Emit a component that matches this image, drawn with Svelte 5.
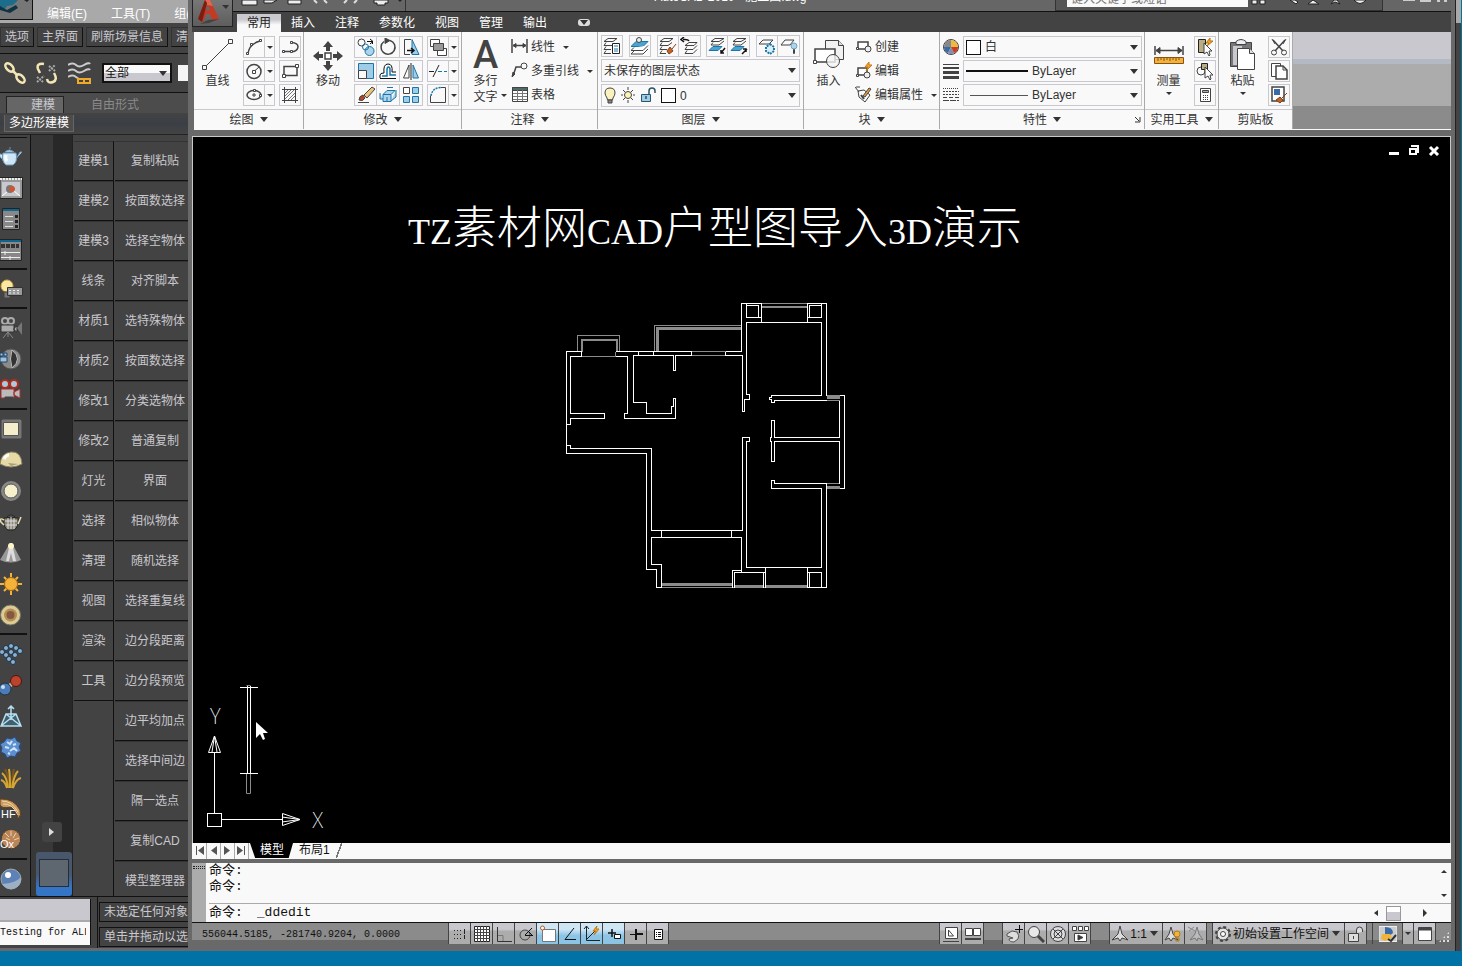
<script>
  // shapes inherit a dark 1px stroke and no fill from .icon
  const icons = {
    line: '<path d="M4 29L29 4"/><path fill="#f9f9f9" d="M1.500 27.500h4v4h-4zM27.500 1.500h4v4h-4z"/>',
    arc: '<path stroke-width="1.500" d="M3 16Q4 6 15 3"/><path fill="#fff" d="M1.500 14.500h2v2h-2zM5.500 5.500h2v2h-2zM14.500 1.500h2v2h-2z"/>',
    polyline: '<path stroke-width="1.500" d="M3 13.500H13Q17 12 17 8.500T10 4.500"/><path fill="#fff" d="M1.500 12.500h2v2h-2zM9.500 12.500h2v2h-2zM9.500 3.500h2v2h-2z"/>',
    circle: '<circle cx="9" cy="9.500" r="7" stroke-width="1.500"/><path d="M9 9.500L14 5"/><path fill="#fff" d="M7.500 8.500h3v3h-3z"/>',
    rectangle: '<path stroke-width="1.500" d="M3 4.500h13v9H3z"/><path fill="#fff" d="M1.500 12.500h3v3h-3zM14.500 2.500h3v3h-3z"/>',
    ellipse: '<ellipse cx="9" cy="9" rx="7" ry="4.500" stroke-width="1.500"/><path d="M7 9h4M9 7v4"/><path fill="#fff" d="M8.500 3.500h2v2h-2zM14.500 8.500h2v2h-2z"/>',
    hatch: '<path d="M1 3.500h16M1 14.500h16M3.500 1v16M14.500 1v16"/><path stroke="#777" d="M4 7l3-3M4 10l6-6M4 13l9-9M7 14l7-7M10 14l4-4"/>',
    move: '<path fill="#434343" stroke="none" d="M15 0l5 6h-3v4h-4V6h-3zM15 30l5-6h-3v-4h-4v4h-3zM0 15l6-5v3h4v4H6v3zM30 15l-6-5v3h-4v4h4v3z"/><path fill="#fff" stroke-width="1.500" d="M12 12h6v6h-6z"/>',
    copy: '<circle cx="4.500" cy="4.500" r="3.500"/><path d="M10 3.500h6M13 1l3 2.500-3 2.500M15.500 3v3" stroke="#111"/><circle cx="12.500" cy="13" r="4.500" fill="#aed4ea" stroke="#1a75a8"/><circle cx="8.500" cy="9" r="3" stroke="#1a75a8"/>',
    rotate: '<path stroke-width="1.500" d="M11 2.500A7 7 0 1 1 5 3.500"/><path fill="#434343" d="M6 0l5 2.500-5 3z"/>',
    stretch: '<path d="M9 1.500H2.500v15H8"/><path fill="#9fcde8" stroke="#1a75a8" d="M10 1.500l7 15h-7z"/><path stroke="#111" stroke-width="1.500" d="M5 12.500h7M9 10l3 2.500L9 15"/>',
    scale: '<path fill="#9fcde8" stroke="#1a75a8" d="M1.500 1.500h15v15h-15z"/><path fill="#f9f9f9" d="M1.500 8.500h8v8h-8z"/>',
    offset: '<path stroke="#111" d="M1 16.500h16M1 16V13q0-2 4-2Q4 2 9 2t4 8h4"/><path stroke="#1a75a8" stroke-width="1.500" d="M3 14h5V8q0-3 1.500-3T11 8v5h6"/>',
    mirror: '<path fill="#f9f9f9" d="M7 3v13H1.500z"/><path fill="#9fcde8" stroke="#1a75a8" d="M11 3v13h5.500z"/><path d="M9 1v17" stroke="#222"/>',
    erase: '<path d="M1 16.500h11"/><path fill="#b84524" d="M2 14q0-4 4-5l2 3q-2 4-6 2z"/><path fill="#e8c47c" d="M7 9l8-8 3 2-8 9z"/>',
    explode: '<path fill="#aed4ea" stroke="#1a75a8" d="M4 8.500h8v7H4zM4 8.500l4-4h8l-4 4M12 15l5-4V4M1 7v6h3"/><path stroke="#1a75a8" d="M8 1.500h6M8 11v5"/>',
    array: '<path fill="#fff" d="M1.500 1.500h6v6h-6z"/><path fill="#9fcde8" stroke="#1a75a8" d="M10.500 1.500h6v6h-6zM1.500 10.500h6v6h-6zM10.500 10.500h6v6h-6z"/>',
    order: '<path fill="#fff" d="M1.500 1.500h9v7h-9zM8.500 10.500h9v7h-9z"/><path fill="#999" d="M4.500 5.500h10v7h-10z"/>',
    trim: '<path stroke="#222" d="M0 9.500h5M4 15l6-12"/><path stroke="#1a75a8" stroke-dasharray="4 2" d="M9 9.500h9"/>',
    fillet: '<path stroke-dasharray="2 1" stroke="#1a75a8" stroke-width="1.500" d="M2 10Q3 2 12 1.500"/><path d="M1.500 10V16.500H16.500V1.500H12"/>',
    linear: '<path stroke-width="1.500" d="M1 1v14M16 1v14M2 7.500h13"/><path fill="#434343" d="M2 7.500l3-2v4zM15 7.500l-3-2v4z"/>',
    leader: '<path stroke-width="1.500" d="M2 14L5 5H10"/><circle cx="13" cy="4" r="3"/><path fill="#434343" d="M1 15l1-5 2 2z"/>',
    table: '<path fill="#fff" d="M1.500 1.500h15v14h-15z"/><path fill="#4e6a6a" d="M1.500 1.500h15v3h-15z"/><path stroke="#777" d="M2 7.500h14M2 10.500h14M2 13.500h14M6.500 4v11M11.500 4v11"/>',
    layerProps: '<path d="M5 1.500h9l-4 3H1zM3 5.500L1 8.500h8M3 9.500L1 12.500h7M3 13.500L1 16.500h7"/><path fill="#fff" stroke="#222" d="M9.500 6.500h7v10h-7z"/><path stroke="#1a75a8" d="M11 9h4M11 12h4M11 14h4"/>',
    layerCur: '<path fill="#4ba3cf" stroke="#1a75a8" d="M5 4.500h12l-5 5H0z"/><path fill="#fff" d="M3 10.500L0 13.500h12l5-5M3 14l-3 3h12l5-5"/><circle cx="8" cy="3" r="2.500" fill="#eee"/>',
    layerMatch: '<path d="M5 1.500h9l-4 3H1zM3 5.500L1 8.500h8l4-3M3 9.500L1 12.500h7M3 13.500L1 16.500h6"/><path fill="#c06427" stroke="#843f16" d="M8 14l3-4 3 4-4 3zM13 12l4-5"/>',
    layerPrev: '<path stroke="#111" stroke-width="1.500" d="M9 4Q8 2 3 2.500M4 0L1 2.500 4 5"/><path d="M9 5.500h8l-3 3H5zM7 9.500L5 12.500h8l4-4M7 13.500L5 16.500h8l4-4"/>',
    layerFreeze: '<path d="M7 1.500h9l-5 3H3zM5 5.500L3 8h8l5-4"/><path fill="#4ba3cf" stroke="#1a75a8" d="M5 9.500h9l-4 4H1z"/><path stroke="#111" stroke-width="1.500" d="M17 11l-4 5M13 13v3h3"/>',
    layerOff: '<path d="M7 1.500h9l-5 3H3zM5 5.500L3 8h8l5-4"/><path fill="#4ba3cf" stroke="#1a75a8" d="M5 9.500h9l-4 4H1z"/><path stroke="#111" stroke-width="1.500" d="M12 17l5-5M13 12h3v3"/>',
    layerIso: '<path d="M5 3h10l-4 4H1z"/><path stroke="#1a75a8" stroke-width="2" stroke-dasharray="2 1" fill="#d9eef8" d="M12 7l4 3v4l-4 3-4-3v-4z"/>',
    layerBulb: '<path d="M5 3h9l-4 5H1z"/><circle cx="14" cy="9" r="3" fill="#aed4ea" stroke="#6aa4c4"/><path d="M13.500 12.500h1v4h-1z"/>',
    bulb: '<path fill="#fbf1bd" d="M6 1q5 0 5 5 0 2-2 5l-.5 2h-5L3 11Q1 8 1 6q0-5 5-5z"/><path fill="#888" d="M4 13h4v3H4z"/>',
    sun: '<circle cx="7" cy="8" r="3.500" fill="#fdf3b5"/><path d="M7 0v3M7 13v3M0 8h2M12 8h2M2 3l2 2M10 11l2 2M2 13l2-2M10 5l2-2"/>',
    unlock: '<path fill="#9fcde8" stroke="#2d5269" d="M1.500 7.500h9v7h-9z"/><path d="M9 7V4q0-3 3-3t3 3v2M6 9v3" stroke="#2d5269" stroke-width="1.500"/>',
    insert: '<path fill="#f1f1f1" d="M12.500 1.500h13l5 5v14h-18z"/><path fill="#ddd" d="M25.500 1.500v5h5"/><path fill="#fff" stroke-width="1.500" d="M2 10h20v13H2z"/><circle cx="20" cy="22" r="6.500" fill="#f4f4f4" fill-opacity=".8"/><path fill="#fff" d="M.5 21.500h3v3h-3z"/>',
    create: '<path fill="#fff" stroke-width="1.500" d="M3 4h10v7H3z"/><circle cx="13" cy="11" r="3" fill="#eee"/><path fill="#fff" d="M1.500 9.500h2v2h-2z"/>',
    edit: '<path fill="#fff" stroke-width="1.500" d="M3 6h9v7H3z"/><circle cx="12" cy="13" r="3" fill="#eee"/><path fill="#f3a22c" stroke="#c77a12" d="M14 0l-4 5h3l-2 4 6-6h-3z"/><path fill="#fff" d="M1.500 12.500h2v2h-2z"/>',
    editAttr: '<path d="M3 5l6-1 6 5-5 7-6-5zM0 1l4 5M1 1h4"/><path stroke-width="2" d="M6 9l3 4"/><path fill="#e7a03c" d="M8 10l6-8 2 1-6 8z"/>',
    wheel: '<circle cx="8" cy="8" r="7.500" fill="#ddd"/><path stroke="none" fill="#3a6ba8" d="M8 8H1q0 4 4 6z"/><path stroke="none" fill="#7d8fb5" d="M8 8l-3 6q3 2 6 0z"/><path stroke="none" fill="#d03c22" d="M8 8l7 0q0 4-4 6z"/><path stroke="none" fill="#ecba3f" d="M8 8V1q6 0 7 7z"/><path stroke="none" fill="#888" d="M8 8V1Q2 1 1 8z"/>',
    weights: '<path d="M0 1.500h16" /><path stroke-width="2" d="M0 5h16"/><path stroke-width="3" d="M0 9.500h16"/><path stroke-width="3" d="M0 14.500h16"/>',
    types: '<path stroke-dasharray="1 1" d="M0 1.500h16"/><path stroke-dasharray="2 1" d="M0 4.500h16M0 7.500h16"/><path stroke-dasharray="4 2" d="M0 10.500h16"/><path stroke-dasharray="6 1" d="M0 13.500h16"/>',
    measure: '<path stroke-width="1.500" d="M1 1v9M29 1v9M2 5.500h26"/><path fill="#434343" d="M2 5.500l4-3v6zM28 5.500l-4-3v6z"/><path fill="#f0b43a" stroke="#8d4f12" d="M.5 12.500h29v6H.5z"/><path stroke="#8d4f12" d="M4 13v3M7 13v2M10 13v3M13 13v2M16 13v3M19 13v2M22 13v3M25 13v2"/>',
    quickSelect: '<path fill="#b9ae83" stroke="#222" d="M2.500 1.500h7v13h-7z"/><path fill="#f3a22c" stroke="#b87510" d="M14 0l-4 5h3l-2 3 6-5h-3z"/><path fill="#fff" d="M8 5v11l3-2 2 4 1-1-1-4h3z"/>',
    selectAll: '<circle cx="5" cy="9" r="4"/><path fill="#b9ae83" stroke="#222" d="M5.500 1.500h6v6h-6z"/><path fill="#fff" d="M9 5v11l3-2 2 4 1-1-1-4h3z"/>',
    calc: '<path fill="#fff" d="M4.500 2.500h10v13h-10z"/><path fill="#aaa" d="M6.500 4.500h6v2h-6z"/><path stroke-dasharray="1 1" d="M7 9.500h6M7 11.500h6M7 13.500h6"/>',
    paste: '<path fill="#777" d="M1.500 3.500h21v24h-21z"/><path fill="#c9c8ce" stroke="none" d="M4 7h9v19H4z"/><path fill="#eee" d="M7 2.500q5-4 10 0v3H7z"/><path fill="#fff" d="M8.500 9.500h12l5 5v16h-17z"/><path fill="#ddd" d="M20.500 9.500v5h5"/>',
    cut: '<path stroke-width="1.500" d="M3 2l10 11M15 2L5 13"/><path d="M2 1l3 5M16 1l-3 5"/><circle cx="4" cy="14.500" r="2.500"/><circle cx="14" cy="14.500" r="2.500"/>',
    copyClip: '<path fill="#fff" d="M1.500 1.500h9v13h-9z"/><path fill="#fff" stroke-width="1.500" d="M6 4h7l4 4v9H6z"/><path d="M13 4v4h4"/>',
    matchProp: '<path fill="#fff" stroke-width="1.500" d="M2 1h12v14H2z"/><path fill="#3a6ba8" stroke="none" d="M4 3h6v6H4z"/><path fill="#c06427" stroke="#843f16" d="M6 14l4-3 3 3-3 3zM12 12l5-5"/>',
    teapot: '<path fill="#cfe6f7" stroke="#6a98ba" d="M3 7h13q2 9-3 12H6Q1 15 3 7zM5 6q4-4 9 0zM9 2h2M3 9Q-2 6 0 11l3 3M16 13l4-7h2"/><path stroke="#fff" stroke-width="3" d="M6 9q-1 4 1 6"/>',
    frame: '<path fill="#999" stroke="#222" d="M0 .5h22.500v21H0z"/><path stroke="#eee" stroke-width="2" stroke-dasharray="2 1" d="M0 2h22"/><path fill="#c9c8ce" stroke="none" d="M2 5h18v14H2z"/><path stroke="#fff" d="M2 19l6-5M20 19l-6-5"/><circle cx="10" cy="12" r="4" fill="#777" stroke="none"/><circle cx="12" cy="12" r="3" fill="#c65a36" stroke="none"/>',
    panel: '<path fill="#888" stroke="#222" d="M2.500 .5h17v21h-17z"/><path stroke="#0e6590" stroke-width="2" d="M3 2h16"/><path stroke="#ddd" d="M5 8.500h8M5 13.500h8M5 18.500h8"/><path stroke="#222" stroke-width="3" d="M15 8.500h3M15 13.500h3M15 18.500h3"/>',
    sliders: '<path fill="#888" stroke="#222" d="M0 .5h21.500v21H0z"/><path stroke="#0e6590" stroke-width="2" d="M0 2h21"/><path stroke="#333" stroke-width="4" stroke-dasharray="4 1" d="M1 7h18"/><path stroke="#eee" d="M1 13.500h19M1 18.500h19M5 12v4M10 17v4"/>',
    lamp: '<circle cx="7" cy="8" r="6" fill="#fbe9a3" stroke="#d9a640"/><path fill="#777" d="M4 14h6v6H4z"/><path fill="#999" stroke="#333" d="M7.500 9.500h15v8h-15z"/><path stroke="#eee" stroke-dasharray="2 2" d="M9 12.500h12M9 15h12"/>',
    camera: '<circle cx="5" cy="4" r="3" fill="#444" stroke="#aaa" stroke-width="2"/><circle cx="11" cy="4" r="3" fill="#444" stroke="#aaa" stroke-width="2"/><path fill="#aaa" stroke="#333" d="M1 8h13v7H1zM14 11l3-2v6l-3-2z"/><path fill="#777" stroke="none" d="M17 11l5-6v13z"/><path d="M8 15l-5 6M8 15l5 6M8 15v5" stroke="#888"/>',
    moon: '<circle cx="11" cy="11" r="10" fill="#8b8b8b" stroke="#555"/><path fill="#333" stroke="#bbb" d="M12 2q11 9 0 18-3-9 0-18z"/><path fill="#9cc4e2" stroke="#246" d="M0 9h7v5H0zM0 5h3v3H0zM4 5h3v3H4z"/>',
    cameraRed: '<circle cx="5" cy="5" r="4" fill="#a8cbe4" stroke="#b32c1a" stroke-width="2"/><circle cx="14" cy="5" r="4" fill="#a8cbe4" stroke="#b32c1a" stroke-width="2"/><path fill="#bbb" stroke="#a33" d="M1 10h13v9H1zM14 13l6-3v9l-6-3z"/><path fill="#444" d="M5 18h8v2H5z"/>',
    plane: '<path stroke="#777" stroke-width="3" stroke-linejoin="round" d="M3 3h17v16H3z"/><path fill="#f5eecb" stroke="#555" d="M3.500 4.500h15v13h-15z"/>',
    dome: '<path fill="#e6d9a6" stroke="#8c8366" d="M0 15Q1 4 11 3t11 12q-11 6-22 0z"/><path fill="#a89e7e" stroke="none" d="M8 14l10 1-7 2z"/><path stroke="#fff" stroke-width="3" d="M4 10q2-4 5-4"/>',
    disc: '<circle cx="11" cy="11" r="8.500" fill="#f7f0cc" stroke="#888" stroke-width="3"/><circle cx="11" cy="11" r="7" stroke="#555"/>',
    teapotWire: '<path fill="#8b8676" stroke="#222" d="M4 7h14q1 9-4 12H8Q3 17 4 7zM7 6q4-4 8 0z"/><path stroke="#eadfb4" stroke-width="1.500" d="M4 9Q-1 6 1 11l3 3M18 13l3-7"/><path stroke="#ddd" d="M5 10h12M6 14h11M8 7v11M11 6v12M14 7v11"/>',
    spot: '<path fill="#999" stroke="none" d="M10 1L0 18q11 5 21 0L12 1z"/><path fill="#ddd" stroke="none" d="M10 1L6 19h3l2-8 2 8h3L12 1z"/><circle cx="11" cy="4" r="3" fill="#fdf6c8" stroke="none"/>',
    sunny: '<path stroke="#f3b33a" stroke-width="2" d="M11 0v22M0 11h22M4 4l14 14M4 18L18 4"/><circle cx="11" cy="11" r="6.500" fill="#f3b33a" stroke="#a86b12"/>',
    target: '<circle cx="10.500" cy="11" r="10" fill="#dccb92" stroke="#776"/><circle cx="10.500" cy="11" r="6.500" fill="#b58e5a" stroke="none"/><circle cx="10.500" cy="11" r="4" fill="#84593f" stroke="none"/>',
    particles: '<g fill="#86b1d4" stroke="#234"><circle cx="2" cy="9" r="2.500"/><circle cx="6" cy="5" r="2.500"/><circle cx="11" cy="3" r="2.500"/><circle cx="6" cy="12" r="2.500"/><circle cx="11" cy="9" r="2.500"/><circle cx="16" cy="5" r="2.500"/><circle cx="20" cy="8" r="2.500"/><circle cx="9" cy="16" r="2.500"/><circle cx="15" cy="12" r="2.500"/><circle cx="13" cy="19" r="2.500"/></g>',
    molecule: '<path stroke="#bbb" stroke-width="4" d="M6 15l9-8"/><circle cx="5" cy="15" r="6" fill="#4b7cb8" stroke="#234"/><circle cx="16" cy="7" r="5.500" fill="#b8442a" stroke="#511"/><circle cx="3" cy="13" r="2" fill="#cde" stroke="none"/>',
    pyramid: '<path fill="#41606f" stroke="#b7dff2" stroke-width="1.500" d="M6 9h10l5 12H1zM6 9l15 12M16 9L1 21M11 15V1M8 4l3-3 3 3"/>',
    rough: '<path fill="#5b8fd0" stroke="#2a4a78" d="M7 2l4 1 4-2 2 4 4 2-2 4 2 4-4 2-2 4-4-1-4 2-2-4-4-2 1-4-2-4 4-2z"/><path stroke="#cfe3fa" stroke-width="2" d="M7 6l3 2 2-3M13 9l3-1M5 11l4 1M10 15l4-3 3 3M8 17l2 1"/>',
    grass: '<path stroke="#7d5518" stroke-width="2" d="M9 21Q9 10 5 2M12 21Q12 10 14 2"/><path stroke="#d6a634" stroke-width="2" d="M8 21Q7 10 2 6M10 21Q10 8 9 2M12 21Q14 8 18 4M13 21q3-9 8-10M7 21Q5 14 1 13"/>',
    hair: '<path fill="#c89a61" stroke="#5c3d1d" d="M0 1Q14 0 20 12q2 5-2 9 0-8-7-12Q2 11 0 7z"/><path stroke="#f2d7a6" d="M2 3q10 0 16 11M3 6q9-1 15 11"/><text x="1" y="20" class="tag">HF</text>',
    fur: '<circle cx="11" cy="10" r="9.500" fill="#b98558" stroke="#4f3524" stroke-dasharray="2 1"/><path stroke="#eed0a8" d="M5 4l4 4M11 2v5M16 4l-3 5M19 9l-5 2M6 9l4 2"/><text x="0" y="19" class="tag">Ox</text>',
    ball: '<circle cx="11" cy="11" r="10" fill="#5e82b8" stroke="#9aa"/><path fill="#9dafc4" stroke="none" d="M2 16q14-1 19-7 1 9-8 12-7 1-11-5z"/><circle cx="8" cy="7" r="3" fill="#fff" stroke="none"/>',
    link: '<g stroke="#f3e6b4" stroke-width="2.500"><ellipse cx="5.500" cy="5.500" rx="3" ry="5" transform="rotate(-45 5.500 5.500)"/><ellipse cx="16.500" cy="16.500" rx="3" ry="5" transform="rotate(-45 16.500 16.500)"/><path d="M8 8l6 6"/></g>',
    unlink: '<path stroke="#f3e6b4" stroke-width="2.500" d="M8 2Q0 1 2 7l2 4M18 11q4 7-1 9t-6-3"/><g stroke="#aaa" stroke-dasharray="2 1" stroke-width="2"><path d="M13 4l6 5M13 9l6-6M1 15l6 5M1 20l7-6"/></g>',
    spacewarp: '<path stroke="#ccc" stroke-width="2" d="M0 3q5-3 8 0t8 0 6-1M0 9q5-3 8 0t8 0 6-1M0 15q5-3 8 0l3 2"/><path stroke="#f0a92a" stroke-width="2" d="M10 17h6v4h-6zM16 17h6v4h-6z"/>',
    snap: '<path stroke="#222" stroke-dasharray="1 2" d="M3 5.500h9M3 9.500h9M3 13.500h9"/><path stroke="#222" stroke-dasharray="5 1" d="M13.500 4v10"/>',
    grid: '<path fill="#fff" stroke="#222" d="M1.500 1.500h15v15h-15z"/><path stroke="#444" d="M4.500 1v16M7.500 1v16M10.500 1v16M13.500 1v16M1 4.500h16M1 7.500h16M1 10.500h16M1 13.500h16"/>',
    ortho: '<path stroke="#333" d="M2.500 2v14.500H17"/><path stroke="#777" d="M3 10.500h5V16"/>',
    polar: '<circle cx="8" cy="10" r="5"/><path stroke="#111" d="M8 10.500h8M8 10l7-7M11 6l4 4"/>',
    osnap: '<path fill="#fff" stroke="#777" d="M3.500 4.500h13v12h-13z"/><circle cx="3.500" cy="3" r="2" fill="#fff" stroke="#b45a1e"/>',
    otrack: '<path stroke="#111" d="M13 3L4 14.500h11"/>',
    ducs: '<path stroke="#222" d="M3.500 1v14.500H17M3 15L12 6M1 4l2.500-3L6 4"/><path fill="#f3a22c" stroke="#c77a12" d="M14 1l-4 5h3l-2 4 5-6h-3z"/>',
    dyn: '<path stroke="#111" stroke-width="1.500" d="M3 8h8M7 4v8"/><path fill="#fff" stroke="#111" d="M9.500 9.500h6v4h-6z"/>',
    lwt: '<path stroke="#111" d="M3 9.500h6M9.500 4v5"/><path stroke="#111" stroke-width="2" d="M9 9h7M9 4v11"/>',
    quick: '<path fill="#fff" stroke="#111" d="M5.500 4.500h8v10h-8z"/><path stroke="#111" stroke-dasharray="1 1 3 5" d="M7 7.500h6M7 9.500h6M7 11.500h6"/>',
    model: '<path fill="#fff" d="M3.500 2.500h12v11h-12zM1 16.500h16"/><path d="M6.500 5v6h5z"/>',
    layouts: '<path fill="#fff" d="M1.500 3.500h7v7h-7zM9.500 3.500h7v7h-7z"/><path stroke-width="2" d="M1 14h16"/>',
    pan: '<path fill="#ddd" stroke="#555" d="M2 9l5-3 5 1q3 4 1 7l-4 3q-5 0-5-3l4-1-6-2z"/><path stroke="#111" d="M10 4.500h8M14.500 0v8"/>',
    zoom: '<circle cx="7" cy="7" r="5.500" fill="#e8e8e8"/><path stroke-width="3" d="M11 11l6 6"/>',
    steering: '<circle cx="9" cy="9" r="7.500" fill="#ddd"/><circle cx="9" cy="9" r="4"/><path d="M4 4l10 10M14 4L4 14"/>',
    motion: '<path fill="#fff" d="M1.500 1.500h4v4h-4zM7.500 1.500h4v4h-4zM13.500 1.500h4v4h-4zM3.500 8.500h12v8h-12z"/><path fill="#333" d="M7 10l5 2.500L7 15z"/>',
    scaleA: '<path fill="#ddd" d="M9 1l2 8 6 6-6-2-2 3-2-3-6 2 6-6z"/>',
    scaleB: '<path fill="#ddd" d="M7 2l2 7 5 6-5-2-2 3-2-3-4 2 4-6z"/><circle cx="13" cy="9" r="3" fill="#f3b33a" stroke="#b57b18"/><path stroke="#b57b18" d="M12 13h3v3h-3z"/>',
    scaleC: '<path stroke="#777" fill="#bbb" d="M11 2l2 7 4 6-5-2-1 3-2-3-5 2 5-6z"/><path stroke="#888" d="M2 2l7 4M3 6l5-4"/>',
    gear: '<circle cx="9" cy="9" r="7" stroke-width="2" stroke-dasharray="3 2.500"/><circle cx="9" cy="9" r="6" fill="#e5e5e5"/><circle cx="9" cy="9" r="2.500" fill="#fff"/>',
    padlock: '<path fill="#ddd" d="M1.500 8.500h10v8h-10zM6.500 11v3M9.500 8V5q0-3 3-3t3 3v2"/>',
    perf: '<path fill="#ccc" stroke="#eee" d="M0 1.500h18v15H0z"/><path fill="#3a6ba8" stroke="none" d="M6 2q8 0 8 6-4 4-8 1z"/><path fill="#f0b43a" stroke="none" d="M3 9h8l2 4-7 3-4-2z"/><path stroke="#333" stroke-width="2" d="M9 14l3 2 5-6"/>',
    clean: '<path fill="#fff" d="M2.500 2.500h13v13h-13z"/><path stroke-width="3" d="M3 4h12"/>'
  };

  const menus = ['编辑(E)', '工具(T)', '组(G)'];
  const quickButtons = ['选项', '主界面', '刷新场景信息', '清理'];
  const toolGroups = [
    ['teapot', 'frame', 'panel', 'sliders'],
    ['lamp'],
    ['camera', 'moon', 'cameraRed'],
    ['plane', 'dome', 'disc', 'teapotWire', 'spot', 'sunny', 'target'],
    ['particles', 'molecule', 'pyramid', 'rough', 'grass', 'hair', 'fur'],
    ['ball']
  ];
  const categories = ['建模1', '建模2', '建模3', '线条', '材质1', '材质2', '修改1', '修改2', '灯光', '选择', '清理', '视图', '渲染', '工具'];
  const scripts = [
    '复制粘贴', '按面数选择', '选择空物体', '对齐脚本', '选特殊物体', '按面数选择', '分类选物体',
    '普通复制', '界面', '相似物体', '随机选择', '选择重复线', '边分段距离', '边分段预览',
    '边平均加点', '选择中间边', '隔一选点', '复制CAD', '模型整理器'
  ];

  const tabs = ['常用', '插入', '注释', '参数化', '视图', '管理', '输出'];
  let activeTab = $state('常用');

  const drawTools = [['arc', 'polyline'], ['circle', 'rectangle'], ['ellipse', 'hatch']];
  const modifyTools = [
    ['copy', 'rotate', 'stretch', 'order'],
    ['scale', 'offset', 'mirror', 'trim'],
    ['erase', 'explode', 'array', 'fillet']
  ];
  const layerTools = [['layerProps'], ['layerCur'], ['layerMatch', 'layerPrev'], ['layerFreeze', 'layerOff'], ['layerIso', 'layerBulb']];

  let toggles = $state([
    { name: 'snap', on: false },
    { name: 'grid', on: false },
    { name: 'ortho', on: false },
    { name: 'polar', on: false },
    { name: 'osnap', on: true },
    { name: 'otrack', on: true },
    { name: 'ducs', on: true },
    { name: 'dyn', on: true },
    { name: 'lwt', on: false },
    { name: 'quick', on: false }
  ]);
  let command = $state('_ddedit');
</script>

{#snippet icon(name, w = 18, h = w)}
  <svg class="icon" width={w} height={h} viewBox="0 0 {w} {h}" aria-hidden="true">{@html icons[name]}</svg>
{/snippet}

{#snippet caret()}<i class="caret"></i>{/snippet}

{#snippet tool(name)}
  <button class="tool" aria-label={name}>{@render icon(name)}</button>
{/snippet}

{#snippet split(name)}
  <span class="joined">
    {@render tool(name)}
    <button class="drop" aria-label="{name} menu"><i class="caret small"></i></button>
  </span>
{/snippet}

<div class="desktop">
  <div class="screen">
    <aside class="max">
      <header class="max-menu">
        <button class="max-logo" aria-label="3ds Max">
          <svg width="32" height="19" viewBox="0 0 32 19"><path fill="#1c6c8c" d="M0 0h18l-5 5-6 1-3 4-4-2z" /><path fill="#0e3444" d="M0 6l7 4 9-5 2 3-8 5-10-3z" /><path fill="#222" d="M24 0h5l-2 2z" /></svg>
        </button>
        {#each menus as menu}<button>{menu}</button>{/each}
      </header>
      <div class="max-quick">
        {#each quickButtons as label}<button>{label}</button>{/each}
      </div>
      <div class="max-tools">
        {@render icon('link', 22)}
        {@render icon('unlink', 22)}
        {@render icon('spacewarp', 24, 22)}
        <label class="filter"><select aria-label="filter"><option>全部</option></select>{@render caret()}</label>
        <span class="stub"></span>
      </div>
      <div class="max-tabs">
        <button class="on">建模</button>
        <button>自由形式</button>
      </div>
      <div class="max-sub"><button>多边形建模</button></div>

      <div class="max-body">
        <div class="icon-bar">
          {#each toolGroups as group}
            <div class="icon-group">
              {#each group as name}<button aria-label={name}>{@render icon(name, 24, 22)}</button>{/each}
            </div>
          {/each}
        </div>
        <div class="strip">
          <button class="play" aria-label="expand"><i></i></button>
          <div class="thumb"><span></span></div>
        </div>
        <div class="scripts">
          <div class="col">{#each categories as label}<button>{label}</button>{/each}</div>
          <div class="col wide">{#each scripts as label}<button>{label}</button>{/each}</div>
        </div>
      </div>

      <footer class="max-status">
        <div class="listener"><span></span><p>Testing for ALL</p></div>
        <div class="prompts"><p>未选定任何对象</p><p>单击并拖动以选择</p></div>
      </footer>
    </aside>

    <main class="cad">
      <header class="cad-head">
        <button class="app" aria-label="AutoCAD">
          <svg width="39" height="26" viewBox="0 0 39 26"><path fill="#c43a22" d="M5 19L12 0h5l9 19-7 1-2-6h-4l-3 8z" /><path fill="#e0684f" d="M12 0h5l3 6-6-1z" /><path fill="#7c1d12" d="M5 19L12 0l2 3-5 19z" /><path fill="#666" d="M13 8l2-3 2 5-3 1z" /><path fill="#434343" d="M7 24l8-4 11-1-10 4z" /><path fill="#333" d="M29 5h7l-3 4z" /></svg>
        </button>
        <div class="head-rows">
          <div class="title-row">
            <div class="quick-access">
              <svg width="165" height="12" viewBox="0 0 165 12"><path fill="#eee" stroke="#222" d="M2 0h15v5H2zM24 0h13l-5 3h-8zM48 0h13v4H48zM134 0h14v3h-3v2h-8V3h-3z" /><path stroke="#ddd" stroke-width="2" fill="none" d="M74 0l3 3M84 0l3 3M104 3l3-3M114 3l3-3" /><path fill="#222" d="M158 0h4l-2 2z" /></svg>
            </div>
            <h1>AutoCAD 2010 - 施工图.dwg</h1>
            <div class="search">
              <input aria-label="搜索" placeholder="键入关键字或短语" />
              <svg width="134" height="12" viewBox="0 0 134 12"><path fill="#eee" stroke="#222" d="M4 0h5v4H4zM12 0h5v4h-5zM42 0l6 4 2-2-3-2zM60 4l5-4 6 4zM83 4l3-4h3l3 4-5-2zM106 0q6 7 12 0z" /></svg>
            </div>
            <svg class="wincontrols" width="48" height="12" viewBox="0 0 48 12"><path fill="#ccc" d="M0 0h12v1H0zM17 0h11v2H17zM34 0h3v2h-3zM41 0h3v2h-3z" /></svg>
          </div>
          <nav class="tabs">
            {#each tabs as tab}
              <button class:on={tab === activeTab} onclick={() => activeTab = tab}>{tab}</button>
            {/each}
            <button class="pill" aria-label="minimize ribbon">{@render caret()}</button>
          </nav>
        </div>
      </header>

      <div class="ribbon">
        <section class="draw">
          <div class="tools">
            <button class="big">{@render icon('line', 33)}<span>直线</span></button>
            <div class="rows">
              {#each drawTools as [first, second]}
                <div class="row">{@render split(first)}{@render tool(second)}</div>
              {/each}
            </div>
          </div>
          <h2>绘图 {@render caret()}</h2>
        </section>

        <section class="modify">
          <div class="tools">
            <button class="big">{@render icon('move', 30)}<span>移动</span></button>
            <div class="rows">
              {#each modifyTools as row}
                <div class="row">
                  <span class="joined">{#each row.slice(0, 3) as name}{@render tool(name)}{/each}</span>
                  {@render split(row[3])}
                </div>
              {/each}
            </div>
          </div>
          <h2>修改 {@render caret()}</h2>
        </section>

        <section class="annotate">
          <div class="tools">
            <button class="big"><b>A</b><span>多行</span><span>文字<i class="caret small"></i></span></button>
            <div class="rows">
              <button class="text">{@render icon('linear')}线性<i class="caret small"></i></button>
              <button class="text">{@render icon('leader')}多重引线<i class="caret small"></i></button>
              <button class="text">{@render icon('table')}表格</button>
            </div>
          </div>
          <h2>注释 {@render caret()}</h2>
        </section>

        <section class="layers">
          <div class="rows">
            <div class="row spread">
              {#each layerTools as group}
                <span class="joined">{#each group as name}{@render tool(name)}{/each}</span>
              {/each}
            </div>
            <label class="combo"><select aria-label="图层状态"><option>未保存的图层状态</option></select>{@render caret()}</label>
            <label class="combo">
              {@render icon('bulb', 13, 17)}{@render icon('sun', 15, 17)}{@render icon('unlock', 17)}
              <span class="swatch"></span>
              <select aria-label="图层"><option>0</option></select>{@render caret()}
            </label>
          </div>
          <h2>图层 {@render caret()}</h2>
        </section>

        <section class="block">
          <div class="tools">
            <button class="big">{@render icon('insert', 32)}<span>插入</span></button>
            <div class="rows">
              <button class="text">{@render icon('create')}创建</button>
              <button class="text">{@render icon('edit')}编辑</button>
              <button class="text">{@render icon('editAttr')}编辑属性<i class="caret small"></i></button>
            </div>
          </div>
          <h2>块 {@render caret()}</h2>
        </section>

        <section class="props">
          <div class="rows">
            <div class="row">
              {@render icon('wheel', 16)}
              <label class="combo"><span class="swatch"></span><select aria-label="颜色"><option>白</option></select>{@render caret()}</label>
            </div>
            <div class="row">
              {@render icon('weights', 16)}
              <label class="combo"><span class="sample"></span><select aria-label="线宽"><option>ByLayer</option></select>{@render caret()}</label>
            </div>
            <div class="row">
              {@render icon('types', 16)}
              <label class="combo"><span class="sample thin"></span><select aria-label="线型"><option>ByLayer</option></select>{@render caret()}</label>
            </div>
          </div>
          <h2>特性 {@render caret()}<svg class="launcher" width="7" height="7" viewBox="0 0 7 7"><path stroke="#333" fill="none" d="M1 1l4 4M6 1v5H1" /></svg></h2>
        </section>

        <section class="utils">
          <div class="tools">
            <button class="big">{@render icon('measure', 30, 20)}<span>测量</span><i class="caret small"></i></button>
            <div class="rows">{@render tool('quickSelect')}{@render tool('selectAll')}{@render tool('calc')}</div>
          </div>
          <h2>实用工具 {@render caret()}</h2>
        </section>

        <section class="clip">
          <div class="tools">
            <button class="big">{@render icon('paste', 27, 32)}<span>粘贴</span><i class="caret small"></i></button>
            <div class="rows">{@render tool('cut')}{@render tool('copyClip')}{@render tool('matchProp')}</div>
          </div>
          <h2>剪贴板</h2>
        </section>
        <div class="rest"></div>
      </div>

      <div class="canvas">
        <p class="drawing-title"><span>TZ</span>素材网<span>CAD</span>户型图导入<span>3D</span>演示</p>

        <svg class="plan" width="310" height="310" viewBox="0 0 310 310">
          <g transform="translate(.5 .5)" fill="none" stroke="#8b8b8b" shape-rendering="crispEdges">
            <path d="M27 61V45H69V61M31 66H65V61M104 61V35H191M141 61H175M141 65H175M211 13H257M211 32H257M276 105H289M276 108H289M276 110H289M276 193H289M276 198H289M111 240H181M111 247H181M111 295H182M111 297H182M182 297H257" />
            <path stroke-width="2" d="M31 61V49H66V61M211 16H257M276 106H289M276 196H289M111 293H182" />
            <path stroke-width="3" d="M107 61V38H191M184 296H213M215 296H257" />
            <g stroke="#fff">
              <path d="M191 61V13H211V32M257 32V13H276V105M289 105H294V198H289M276 193V297H257M31 61H16V163H96V279H106V297H111M65 61H141M175 61H191" />
              <path d="M31 61V66H20V123H54V128H20V134H16M65 66H77V123H74V128H125V108H123V116H121V123H96V112H83V65H123V80H125V65H141V61M88 61V65M103 61V65" />
              <path d="M175 61V65H192V121H194V109H199V104H196V32H271V105H221V107H219V109H221V112H224V110H276" />
              <path d="M16 155H20V158H101V240H192V147H199V151H196V277H271V198H221V190H224V193H276" />
              <path d="M289 110V147H224V130H221V147H220V151H221V171H224V151H289V193" />
              <path d="M111 297V274H101V247H191V282M111 240V247M181 240V247M191 280H182V297M184 297V282H215M213 282V297M215 277V297M257 277V297M257 282H271V297M259 282V297" />
              <path d="M196 13V27H211M196 15H208V27M257 27H271V13M271 15H259V27" />
            </g>
          </g>
        </svg>

        <svg class="ucs" width="150" height="162" viewBox="0 0 150 162">
          <g fill="none" stroke="#fff">
            <path shape-rendering="crispEdges" d="M14.500 133.500h14v13h-14zM21.500 133V72M28 139.500H89M54.500 6V93M57.500 6V93M47 7.500H65M47 93.500H65" />
            <path d="M15.500 72.500L21.500 56L27.500 72.500zM19 72L21.500 56L24 72M89.500 133.500L107 139.500L89.500 145.500zM89 137L107 139.500L89 142" />
            <path stroke="#8b8b8b" d="M53.500 94V113.500H57.500V94M53.500 5.500H57.500" />
          </g>
          <g fill="#fff"><text x="17" y="44">Y</text><text x="119" y="148">X</text></g>
          <path fill="#fff" d="M63 42V58L67 54L70 60L72 59L70 53H75z" />
        </svg>

        <div class="doc-controls">
          <button aria-label="minimize"><svg width="12" height="11" viewBox="0 0 12 11"><path fill="#fff" d="M1 7h10v3H1z" /></svg></button>
          <button aria-label="restore"><svg width="12" height="11" viewBox="0 0 12 11"><path fill="none" stroke="#fff" stroke-width="2" d="M4 2V1h6v6H9M2 4h6v5H2z" /></svg></button>
          <button aria-label="close"><svg width="12" height="11" viewBox="0 0 12 11"><path stroke="#fff" stroke-width="3" d="M2 2l8 8M10 2l-8 8" /></svg></button>
        </div>
      </div>

      <div class="layout-tabs">
        <svg width="58" height="16" viewBox="0 0 58 16"><path stroke="#aaa" d="M14.500 0v16M28.500 0v16M42.500 0v16M56.500 0v16" /><path fill="#555" d="M4 3h1v9H4zM12 3v9L6 7.500zM25 3v9l-6-4.500zM32 3v9l6-4.500zM45 3v9l6-4.500zM52 3h1v9h-1z" /></svg>
        <button class="model">模型</button>
        <button class="layout">布局1</button>
      </div>

      <div class="command">
        <div class="grip"></div>
        <div class="lines">
          <div class="history">
            <p>命令:<br />命令:</p>
            <span class="vscroll"><i class="caret up small"></i><i class="caret small"></i></span>
          </div>
          <div class="entry">
            <label for="command">命令:</label>
            <input id="command" bind:value={command} />
            <span class="hscroll"><i class="left"></i><b></b><i class="right"></i></span>
          </div>
        </div>
      </div>

      <footer class="status">
        <span class="coords">556044.5185, -281740.9204, 0.0000</span>
        <div class="cells">
          {#each toggles as toggle}
            <button class:on={toggle.on} aria-label={toggle.name} onclick={() => toggle.on = !toggle.on}>{@render icon(toggle.name)}</button>
          {/each}
        </div>
        <div class="cells right">
          <button aria-label="model">{@render icon('model')}</button>
          <button aria-label="layouts">{@render icon('layouts')}</button>
        </div>
        <div class="cells">
          {#each ['pan', 'zoom', 'steering', 'motion'] as name}<button aria-label={name}>{@render icon(name)}</button>{/each}
        </div>
        <div class="cells">
          <button class="label">{@render icon('scaleA')}1:1{@render caret()}</button>
          <button aria-label="visibility">{@render icon('scaleB')}</button>
          <button aria-label="auto scale">{@render icon('scaleC')}</button>
        </div>
        <div class="cells near">
          <button class="label">{@render icon('gear')}初始设置工作空间{@render caret()}</button>
          <button aria-label="lock">{@render icon('padlock')}</button>
        </div>
        <div class="cells tail">
          <button class="flat" aria-label="performance">{@render icon('perf')}</button>
          <button class="narrow" aria-label="status menu"><i class="caret small"></i></button>
          <button aria-label="clean screen">{@render icon('clean')}</button>
        </div>
        <span class="size-grip"></span>
      </footer>
    </main>
    <div class="edge"></div>
  </div>
  <div class="wallpaper"></div>
</div>

<style>
  :global(body) {
    margin: 0;
    background: #0072a6;
  }

  .desktop {
    display: flex;
    flex-direction: column;
    height: 100vh;
    overflow: hidden;
    font: 12px/16px "Liberation Sans", "Noto Sans CJK SC", sans-serif;
    color: #333;
  }

  .screen {
    display: flex;
    flex: 1;
    min-height: 0;
  }

  .wallpaper {
    height: 15px;
    background: #0072a6;
  }

  button {
    padding: 0;
    border: 0;
    background: none;
    color: inherit;
    font: inherit;
    white-space: nowrap;
  }

  select,
  input {
    min-width: 0;
    padding: 0;
    border: 0;
    background: none;
    color: inherit;
    font: inherit;
    appearance: none;
    outline: none;
  }

  p,
  h1,
  h2 {
    margin: 0;
    font: inherit;
  }

  svg {
    display: block;
    flex: none;
  }

  .icon {
    fill: none;
    stroke: #434343;
  }

  .icon :global(.tag) {
    fill: #fff;
    stroke: none;
    font: 11px "Liberation Sans", sans-serif;
  }

  .caret {
    display: inline-block;
    flex: none;
    border: 4px solid transparent;
    border-top: 5px solid #333;
    border-bottom: 0;
  }

  .caret.small {
    border-width: 3px;
    border-bottom: 0;
  }

  .caret.up {
    border-top: 0;
    border-bottom: 3px solid #333;
  }

  /* 3ds Max window */

  .max {
    display: flex;
    flex: none;
    flex-direction: column;
    width: 188px;
    overflow: hidden;
    background: #434343;
    color: #c9c8ce;
    white-space: nowrap;
  }

  .max-menu {
    display: flex;
    height: 23px;
    gap: 24px;
    background: #a9a9a9;
    color: #fff;
  }

  .max-menu button {
    padding-top: 4px;
  }

  .max-menu .max-logo {
    height: 20px;
    margin-right: -10px;
    padding: 0;
    border-right: 1px solid #111;
    border-bottom: 1px solid #111;
    background: #777;
  }

  .max-quick {
    display: flex;
    gap: 3px;
    padding: 4px 0 6px;
    border-bottom: 1px solid #111;
  }

  .max-quick button {
    padding: 1px 4px;
    border: 1px solid #333;
    border-right-color: #111;
    border-bottom-color: #111;
  }

  .max-tools {
    display: flex;
    align-items: center;
    gap: 10px;
    height: 38px;
    padding-left: 4px;
    border-bottom: 1px solid #111;
  }

  .filter {
    display: flex;
    flex: none;
    align-items: center;
    width: 63px;
    padding-right: 3px;
    border: 2px solid #111;
    background: linear-gradient(#f9f9f9 50%, #c9c8ce 50%);
    color: #111;
  }

  .filter select {
    flex: 1;
    padding-left: 1px;
  }

  .stub {
    flex: none;
    width: 20px;
    height: 16px;
    margin-left: -4px;
    background: #f4f4f4;
  }

  .max-tabs {
    display: flex;
    gap: 27px;
    padding: 3px 0 0 6px;
    background: #4c4c4c;
    color: #8b8b8b;
  }

  .max-tabs .on {
    padding: 0 8px 0 24px;
    border: 1px solid #222;
    border-bottom: 0;
    background: #666;
    color: #c9c8ce;
  }

  .max-sub {
    padding: 2px 0 2px 4px;
    background: linear-gradient(#434343, #3b3f46 50%, #434343);
  }

  .max-sub button {
    padding: 0 4px;
    border: 1px solid #666;
    border-top: 0;
    background: #4c4c4c;
    color: #fff;
  }

  .max-body {
    display: flex;
    flex: 1;
    min-height: 0;
    overflow: hidden;
    border-top: 1px solid #222;
  }

  .icon-bar {
    flex: none;
    width: 30px;
    padding-top: 2px;
    border-right: 1px solid #111;
  }

  .icon-group {
    width: 27px;
    padding: 3px 0;
    border-top: 1px solid #111;
    box-sizing: border-box;
  }

  .icon-group + .icon-group {
    border-top-width: 2px;
  }

  .icon-group button {
    display: block;
    height: 31px;
  }

  .strip {
    display: flex;
    flex: none;
    flex-direction: column;
    justify-content: flex-end;
    align-items: center;
    gap: 10px;
    width: 41px;
    border-right: 1px solid #222;
    background: linear-gradient(90deg, #383838 54%, #282828 54%);
  }

  .play {
    display: grid;
    place-items: center;
    width: 20px;
    height: 20px;
    border-radius: 3px;
    background: #434343;
  }

  .play i,
  .hscroll .right {
    border: 4px solid transparent;
    border-left: 5px solid #ddd;
    border-right: 0;
  }

  .thumb {
    width: 36px;
    height: 44px;
    margin-left: 4px;
    box-sizing: border-box;
    border-radius: 3px;
    padding: 7px 3px 0;
    background: linear-gradient(#48576b 50%, #3475c6 80%);
  }

  .thumb span {
    display: block;
    height: 26px;
    border: 1px solid #252d38;
    background: #5e6670;
  }

  .scripts {
    display: flex;
    flex: none;
    margin: 6px 0 0 1px;
  }

  .col {
    width: 39px;
    border-right: 1px solid #111;
  }

  .col.wide {
    width: 80px;
    margin-left: 1px;
  }

  .col button {
    display: block;
    width: 100%;
    height: 40px;
    border-top: 1px solid #333;
    border-bottom: 1px solid #111;
    box-sizing: border-box;
  }

  .max-status {
    display: flex;
    gap: 6px;
    height: 51px;
    border-top: 1px solid #111;
    border-bottom: 3px solid #696969;
  }

  .listener {
    flex: none;
    width: 90px;
    height: 46px;
    margin-top: 2px;
    background: #f9f9f9;
    border-right: 1px solid #111;
    color: #111;
    font: 10px/22px "Liberation Mono", monospace;
    overflow: hidden;
  }

  .listener span {
    display: block;
    height: 21px;
    border-bottom: 2px solid #aaa;
    background: #c9c8ce;
  }

  .listener p {
    width: 86px;
    overflow: hidden;
  }

  .prompts {
    flex: 1;
    padding: 5px 0 0 1px;
    border-left: 1px solid #111;
  }

  .prompts p {
    height: 18px;
    margin-bottom: 5px;
    padding-left: 4px;
    border: 1px solid #111;
    line-height: 18px;
  }

  /* AutoCAD window */

  .cad {
    display: flex;
    flex: 1;
    flex-direction: column;
    min-width: 0;
    border-left: 4px solid #696969;
    border-right: 4px solid #696969;
    border-bottom: 4px solid #696969;
    background: #696969;
  }

  .edge {
    width: 5px;
    margin-right: 1px;
    border-left: 1px solid #222;
    background: linear-gradient(#a9a9a9 23px, #434343 23px);
  }

  .cad-head {
    display: flex;
    height: 32px;
    background: #434343;
  }

  .app {
    align-self: flex-start;
    border: 1px solid #222;
    border-top: 0;
    background: linear-gradient(#777, #5e5e5e);
  }

  .head-rows {
    flex: 1;
    min-width: 0;
  }

  .title-row {
    display: flex;
    height: 11px;
    overflow: hidden;
    border-bottom: 1px solid #111;
    background: #666;
  }

  .quick-access {
    margin-left: 7px;
    border-right: 1px solid #333;
  }

  .title-row h1 {
    flex: 1;
    margin-top: -11px;
    color: #fff;
    text-align: center;
  }

  .search {
    display: flex;
    flex: none;
    height: 10px;
    padding-left: 11px;
    border: 1px solid #333;
    border-top: 0;
    background: #555;
  }

  .search input {
    width: 177px;
    height: 16px;
    margin-top: -9px;
    padding-left: 4px;
    background: #f9f9f9;
    color: #666;
  }

  .wincontrols {
    margin: 0 0 0 20px;
  }

  .tabs {
    display: flex;
    height: 20px;
    padding-left: 4px;
    align-items: flex-end;
    color: #fff;
  }

  .tabs button {
    height: 18px;
    padding: 0 10px;
  }

  .tabs .on {
    background: linear-gradient(#c9c8ce 30%, #f9f9f9 60%);
    color: #222;
  }

  .tabs .pill {
    display: flex;
    align-self: center;
    align-items: center;
    height: 7px;
    margin-left: 21px;
    padding: 0 2px;
    border-radius: 3px;
    background: #ddd;
  }

  .ribbon {
    display: flex;
    height: 97px;
    margin-left: 2px;
    border-bottom: 1px solid #f9f9f9;
    background: #f9f9f9;
  }

  .ribbon section {
    display: flex;
    flex: none;
    flex-direction: column;
    box-sizing: border-box;
    border-right: 1px solid #aaa;
  }

  .draw { width: 110px; }
  .modify { width: 158px; }
  .annotate { width: 136px; }
  .layers { width: 206px; }
  .block { width: 136px; }
  .props { width: 205px; }
  .utils { width: 74px; }
  .clip { width: 74px; }

  .rest {
    flex: 1;
    background: linear-gradient(#c9c8ce 27px, #b4bac4 27px 32px, #acacac 32px 74px, #8b8b8b 74px);
  }

  .ribbon h2 {
    display: flex;
    align-items: center;
    justify-content: center;
    gap: 6px;
    height: 19px;
    margin-top: auto;
    border-top: 1px solid #c9c8ce;
  }

  .tools {
    display: flex;
    justify-content: space-between;
  }

  .big {
    display: flex;
    flex: 1;
    flex-direction: column;
    align-items: center;
    justify-content: flex-end;
    height: 57px;
    line-height: 16px;
  }

  .big .icon {
    margin-bottom: 2px;
  }

  .utils .icon {
    flex: none;
  }

  .big b {
    font: 500 38px/36px Roboto, sans-serif;
    color: #434343;
  }

  .annotate .big {
    height: 73px;
  }

  .annotate .big .caret {
    margin: 0 -9px 4px 3px;
  }

  .utils .big,
  .clip .big {
    height: 63px;
  }

  .utils .big .icon {
    margin-bottom: 8px;
  }

  .big > .caret {
    margin-top: 3px;
  }

  .rows {
    display: flex;
    flex-direction: column;
    gap: 2px;
    padding: 4px 2px 0;
  }

  .row {
    display: flex;
    align-items: center;
    gap: 4px;
  }

  .row.spread {
    justify-content: space-between;
  }

  .joined {
    display: flex;
  }

  .tool,
  .drop {
    display: grid;
    place-items: center;
    width: 22px;
    height: 22px;
    box-sizing: border-box;
    border: 1px solid #c9c8ce;
  }

  .joined > :global(button + button) {
    border-left: 0;
  }

  .drop {
    width: 10px;
  }

  .modify .joined .tool {
    width: 23px;
  }

  .modify .row > .joined:last-child .tool {
    width: 22px;
  }

  .text {
    display: flex;
    align-items: center;
    gap: 2px;
    height: 22px;
  }

  .text .caret {
    margin-left: 6px;
  }

  .annotate .rows {
    width: 84px;
  }

  .block .rows {
    width: 82px;
  }

  .layers .rows {
    padding: 3px 3px 0;
    gap: 2px;
  }

  .combo {
    display: flex;
    flex: 1;
    align-items: center;
    gap: 4px;
    height: 22px;
    padding: 0 3px 0 2px;
    box-sizing: border-box;
    border: 1px solid #c9c8ce;
  }

  .layers .combo {
    flex: none;
    height: 23px;
  }

  .combo select {
    flex: 1;
  }

  .swatch {
    flex: none;
    width: 13px;
    height: 13px;
    border: 1px solid #111;
    background: #fff;
  }

  .sample {
    width: 62px;
    border-top: 2px solid #111;
  }

  .sample.thin {
    width: 58px;
    margin-left: 4px;
    border-top: 1px solid #555;
  }

  .props .rows {
    padding-left: 3px;
  }

  .props h2 {
    position: relative;
  }

  .launcher {
    position: absolute;
    right: 3px;
    bottom: 6px;
  }

  .canvas {
    position: relative;
    flex: 1;
    min-height: 0;
    margin-top: 6px;
    border: 1px solid #c9c8ce;
    border-bottom: 0;
    background: #000;
    overflow: hidden;
  }

  .drawing-title {
    position: absolute;
    top: 56px;
    left: 215px;
    color: #fff;
    font: 300 45px/64px "Noto Sans CJK SC", sans-serif;
    white-space: nowrap;
  }

  .drawing-title span {
    font: 36px/64px "Liberation Serif", serif;
  }

  .plan {
    position: absolute;
    top: 153px;
    left: 357px;
  }

  .ucs {
    position: absolute;
    bottom: 1px;
    left: 0;
    font: 100 22px "Noto Sans CJK SC", sans-serif;
  }

  .doc-controls {
    position: absolute;
    top: 8px;
    right: 10px;
    display: flex;
    gap: 8px;
  }

  .layout-tabs {
    display: flex;
    height: 16px;
    background: #f9f9f9;
    color: #111;
  }

  .layout-tabs button {
    height: 15px;
    line-height: 15px;
  }

  .model {
    padding: 0 9px 0 10px;
    background: #000;
    clip-path: polygon(0 0, 100% 0, 90% 100%, 12% 100%);
    color: #fff;
  }

  .layout {
    padding: 0 12px 0 6px;
    background: linear-gradient(110deg, transparent 88%, #777 88% 91%, transparent 91%);
  }

  .command {
    display: flex;
    height: 59px;
    margin-top: 4px;
    background: #f9f9f9;
    color: #111;
    font: 13px/16px "Liberation Mono", "Noto Sans CJK SC", monospace;
  }

  .grip {
    width: 14px;
    background: #acacac;
  }

  .grip::before {
    content: '';
    display: block;
    width: 12px;
    height: 1px;
    margin: 3px 1px;
    border-top: 1px dotted #222;
    border-bottom: 1px dotted #222;
  }

  .lines {
    flex: 1;
    padding-left: 3px;
  }

  .history {
    display: flex;
    justify-content: space-between;
    height: 40px;
    border-bottom: 1px solid #aaa;
  }

  .vscroll {
    display: flex;
    flex-direction: column;
    justify-content: space-between;
    padding: 7px 4px 6px;
  }

  .entry {
    display: flex;
    align-items: center;
    gap: 14px;
    height: 18px;
  }

  .entry input {
    flex: 1;
  }

  .hscroll {
    display: flex;
    align-items: center;
    gap: 8px;
    padding-right: 24px;
  }

  .hscroll i {
    border: 3px solid transparent;
  }

  .hscroll .left {
    border-left: 0;
    border-right: 4px solid #333;
  }

  .hscroll .right {
    margin-left: 14px;
    border-left: 4px solid #333;
  }

  .hscroll b {
    width: 13px;
    height: 13px;
    border: 1px solid #999;
    background: linear-gradient(#fff 40%, #c9c8ce 40%);
  }

  .status {
    display: flex;
    align-items: flex-start;
    height: 24px;
    border-top: 1px solid #111;
    background: linear-gradient(#8b8b8b 17px, #696969 17px);
    color: #111;
  }

  .coords {
    width: 246px;
    padding-left: 10px;
    font: 10px/24px "Liberation Mono", monospace;
  }

  .cells {
    display: flex;
    margin-left: 18px;
    border-left: 1px solid #434343;
  }

  .coords + .cells {
    margin-left: 0;
  }

  .cells.right {
    margin-left: auto;
  }

  .cells.near,
  .cells.tail {
    margin-left: 5px;
  }

  .cells button {
    display: grid;
    place-items: center;
    width: 22px;
    height: 21px;
    border-right: 1px solid #434343;
    box-sizing: border-box;
    background: linear-gradient(#c9c8ce 30%, #acacac 40%);
  }

  .cells .on {
    background: linear-gradient(#cfe6f5 30%, #8cc4e6 60%);
  }

  .cells .label {
    display: flex;
    align-items: center;
    width: auto;
    gap: 1px;
    padding: 0 4px 0 1px;
  }

  .cells .label .caret {
    margin-left: 2px;
  }

  .cells .flat {
    width: 30px;
    background: none;
  }

  .cells .narrow {
    width: 11px;
  }

  .size-grip {
    width: 12px;
    height: 12px;
    margin: 8px 1px 0 2px;
    background: radial-gradient(#ddd 1px, transparent 1px) 0 0 / 4px 4px;
    clip-path: polygon(100% 0, 100% 100%, 0 100%);
  }
</style>
